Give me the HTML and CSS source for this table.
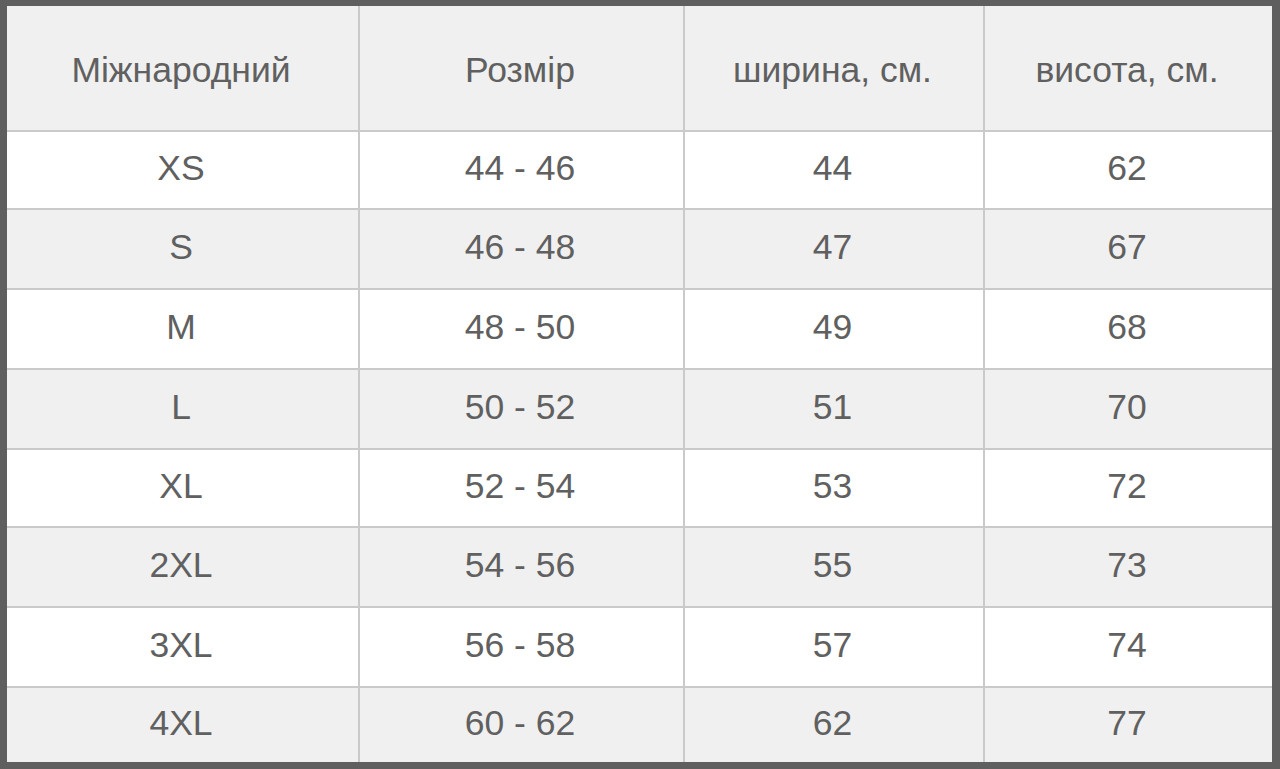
FILE: index.html
```html
<!DOCTYPE html>
<html lang="uk">
<head>
<meta charset="utf-8">
<title>Таблиця розмірів</title>
<link rel="stylesheet" href="styles.css">
</head>
<body>
<div class="frame">
<table class="sizes">
  <colgroup>
    <col class="c1"><col class="c2"><col class="c3"><col class="c4">
  </colgroup>
  <thead>
    <tr class="head"><th>Міжнародний</th><th>Розмір</th><th>ширина, см.</th><th>висота, см.</th></tr>
  </thead>
  <tbody>
    <tr class="odd short"><td>XS</td><td>44 - 46</td><td>44</td><td>62</td></tr>
    <tr class="even"><td>S</td><td>46 - 48</td><td>47</td><td>67</td></tr>
    <tr class="odd"><td>M</td><td>48 - 50</td><td>49</td><td>68</td></tr>
    <tr class="even"><td>L</td><td>50 - 52</td><td>51</td><td>70</td></tr>
    <tr class="odd short"><td>XL</td><td>52 - 54</td><td>53</td><td>72</td></tr>
    <tr class="even"><td>2XL</td><td>54 - 56</td><td>55</td><td>73</td></tr>
    <tr class="odd"><td>3XL</td><td>56 - 58</td><td>57</td><td>74</td></tr>
    <tr class="even last"><td>4XL</td><td>60 - 62</td><td>62</td><td>77</td></tr>
  </tbody>
</table>
</div>
</body>
</html>
```

FILE: styles.css
```css
html, body {
  margin: 0;
  padding: 0;
  background: #5f5f5f;
}
.frame {
  width: 1280px;
  height: 769px;
  box-sizing: border-box;
  border-style: solid;
  border-color: #5f5f5f;
  border-width: 6px 8px 7px 7px;
  background: #f0f0f0;
  overflow: hidden;
}
.sizes {
  width: 1265px;
  border-collapse: collapse;
  table-layout: fixed;
  font-family: "Liberation Sans", Arial, sans-serif;
  font-size: 35.5px;
  color: #606060;
}
.c1 { width: 352px; }
.c2 { width: 325px; }
.c3 { width: 300px; }
.c4 { width: 288px; }
.sizes th,
.sizes td {
  padding: 0 3px 0 0;
  text-align: center;
  vertical-align: middle;
  font-weight: normal;
  border: 2px solid #cacaca;
}
.sizes tr:first-child th { border-top: none; }
.sizes tr:last-child td { border-bottom: none; }
.sizes th:first-child, .sizes td:first-child { border-left: none; }
.sizes th:last-child, .sizes td:last-child { border-right: none; }
.head th {
  height: 120px;
  background: #f0f0f0;
  padding-top: 4px;
}
.sizes td {
  height: 75px;
  padding-bottom: 3px;
}
.sizes .short td { height: 73px; }
.sizes .last td { height: 71px; }
.odd td { background: #ffffff; }
.even td { background: #f0f0f0; }
```
